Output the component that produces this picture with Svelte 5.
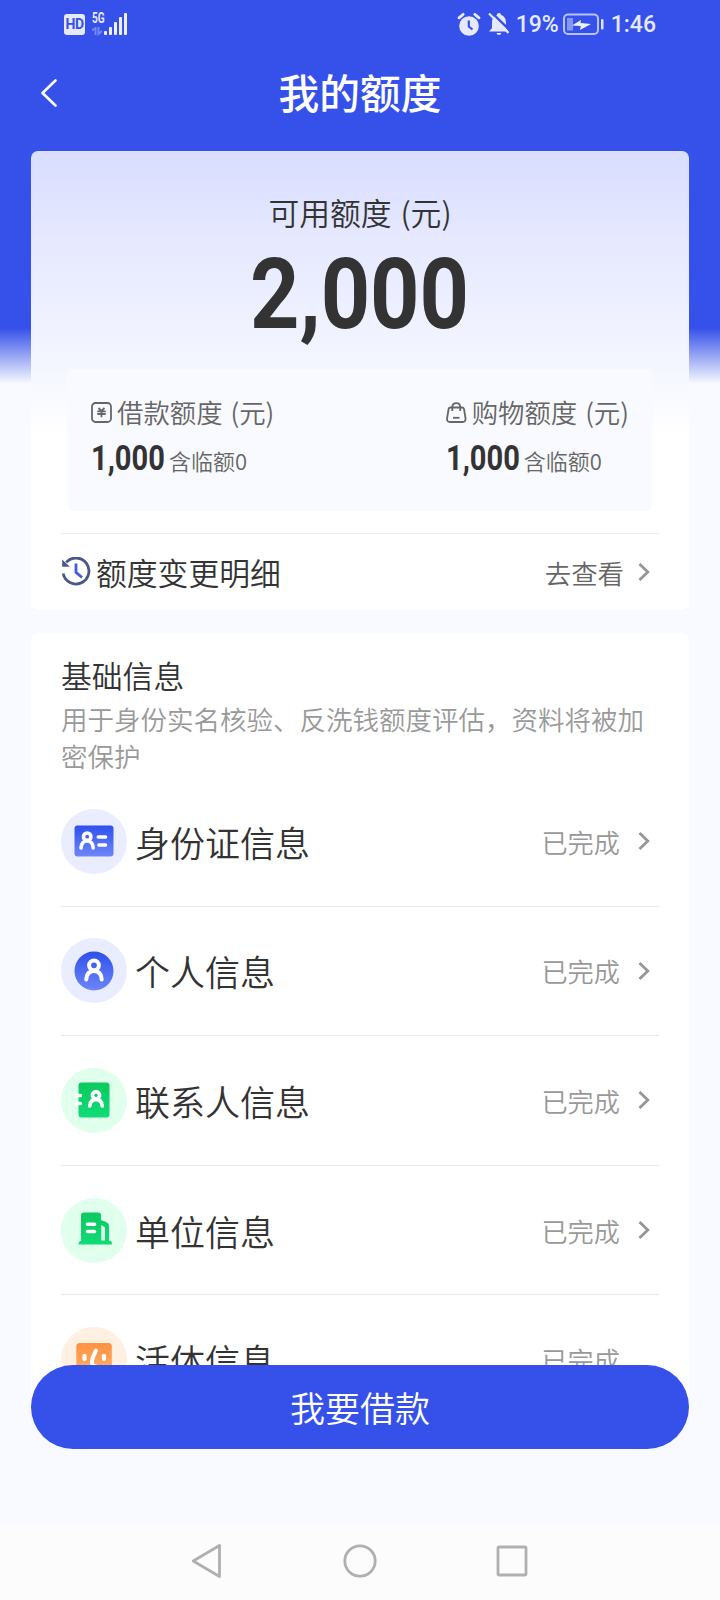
<script lang="ts">
	type Quota = { id: string; label: string; amount: string; note: string };
	type Info = { id: string; label: string; tone: string; status: string; link: boolean };

	const quotas: Quota[] = [
		{ id: "loan", label: "借款额度 (元)", amount: "1,000", note: "含临额0" },
		{ id: "shop", label: "购物额度 (元)", amount: "1,000", note: "含临额0" },
	];

	const infos: Info[] = [
		{ id: "idcard", label: "身份证信息", tone: "blue", status: "已完成", link: true },
		{ id: "person", label: "个人信息", tone: "blue", status: "已完成", link: true },
		{ id: "contact", label: "联系人信息", tone: "green", status: "已完成", link: true },
		{ id: "company", label: "单位信息", tone: "green", status: "已完成", link: true },
		{ id: "face", label: "活体信息", tone: "orange", status: "已完成", link: false },
	];
</script>

{#snippet chevron()}
	<svg class="chevron" width="13" height="20" viewBox="0 0 13 20">
		<path d="M2.5 2 L10.8 10 L2.5 18" fill="none" stroke="#969696" stroke-width="2.8" />
	</svg>
{/snippet}

<div class="phone">
	<div class="status-bar">
		<div class="status-left">
			<span class="hd">HD</span>
			<div class="network">
				<span class="net-type">5G</span>
				<svg width="10" height="9" viewBox="0 0 10 9" fill="none" stroke="#7487f2" stroke-width="2">
					<path d="M0 3.5 L3.5 1 V8 M6.5 0 V7 L10 4" />
				</svg>
			</div>
			<svg class="signal" width="24" height="23" viewBox="0 0 24 23" fill="#eef0ff">
				<rect x="0" y="18" width="3" height="4" rx="1" />
				<rect x="5" y="14" width="3" height="8" rx="1" />
				<rect x="10" y="9" width="3" height="13" rx="1" />
				<rect x="15" y="4" width="3" height="18" rx="1" />
				<rect x="20" y="0" width="3" height="22" rx="1" />
			</svg>
		</div>
		<div class="status-right">
			<svg width="24" height="24" viewBox="0 0 24 24">
				<circle cx="12" cy="14" r="9.8" fill="#e6e9ff" />
				<path d="M2 5.8 L6.2 2.3 M22 5.8 L17.8 2.3" stroke="#e6e9ff" stroke-width="2.8" stroke-linecap="round" />
				<path d="M11.8 8.5 V14.5 L15.5 17.5" fill="none" stroke="#3551ea" stroke-width="2.2" />
			</svg>
			<svg class="bell" width="22" height="24" viewBox="0 0 22 24">
				<path d="M11 1 C12.6 1 13 2 13 3 C17 4.3 18 7.5 18 11 V16 L21 19.5 H1 L4 16 V11 C4 7.5 5 4.3 9 3 C9 2 9.4 1 11 1 Z M8.5 21 H13.5 C13 23.5 9 23.5 8.5 21 Z" fill="#e6e9ff" />
				<path d="M3 0 L22 18.5" stroke="#3551ea" stroke-width="2.4" />
				<path d="M1 1.5 L20.5 21" stroke="#e6e9ff" stroke-width="2.2" />
			</svg>
			<span class="status-text percent">19%</span>
			<svg class="battery" width="42" height="23" viewBox="0 0 42 23">
				<rect x="1" y="1.5" width="34" height="19.5" rx="4" fill="none" stroke="#b9c3fb" stroke-width="2" />
				<rect x="4" y="5" width="6" height="12.5" fill="#8496f4" />
				<path d="M9 12.5 L18 7 L17.5 10 L28 11 L17 17 L17.8 13 Z" fill="#eef0ff" />
				<rect x="38" y="6" width="2.5" height="10.5" rx="1" fill="#dfe3ff" />
			</svg>
			<span class="status-text">1:46</span>
		</div>
	</div>

	<header class="nav">
		<svg class="back" width="18" height="30" viewBox="0 0 18 30">
			<path d="M15.5 2.5 L2.5 15 L15.5 27.5" fill="none" stroke="#fff" stroke-width="2.6" stroke-linecap="round" stroke-linejoin="round" />
		</svg>
		<h1>我的额度</h1>
	</header>

	<main>
		<section class="card quota-card">
			<p class="total-label">可用额度 (元)</p>
			<p class="total"><span>2,000</span></p>

			<div class="quota-box">
				{#each quotas as quota (quota.id)}
					<div class="quota">
						<div class="quota-label">
							{#if quota.id === "loan"}
								<svg width="21" height="21" viewBox="0 0 21 21" fill="none" stroke="#666">
									<rect x="1" y="1" width="19" height="19" rx="3.5" stroke-width="1.8" />
									<path d="M7.5 6 L10.5 9 L13.5 6 M6.3 9.3 H14.7 M6.3 12 H14.7 M10.5 9 V15.2" stroke-width="1.8" />
								</svg>
							{:else}
								<svg width="21" height="21" viewBox="0 0 21 21" fill="none" stroke="#666" stroke-width="1.8">
									<path d="M4.5 5.5 H16 C17.3 5.5 17.7 6 18 7 L19.5 16 C19.8 18.7 18.8 20 16.5 20 H4 C1.7 20 0.8 18.7 1.1 16 L2.6 7 C2.8 6 3.2 5.5 4.5 5.5 Z" />
									<path d="M6.3 9 V5 C6.3 -0.3 14.2 -0.3 14.2 5 V9" />
									<path d="M7 15.8 H13.5" />
								</svg>
							{/if}
							<span>{quota.label}</span>
						</div>
						<div class="quota-value">
							<strong>{quota.amount}</strong>
							<span>{quota.note}</span>
						</div>
					</div>
				{/each}
			</div>

			<div class="history">
				<svg width="30" height="30" viewBox="0 0 30 30" fill="none">
					<path d="M5.2 5.4 A13 13 0 1 1 2.2 16.5" stroke="#4a5888" stroke-width="2.8" />
					<path d="M1.2 2.5 V9.8 H8.8 Z" fill="#4a5888" />
					<path d="M15 6.5 V15.3 L21 20.5" stroke="#4458e8" stroke-width="2.8" />
				</svg>
				<span class="history-title">额度变更明细</span>
				<span class="history-link">去查看</span>
				{@render chevron()}
			</div>
		</section>

		<section class="card info-card">
			<h2>基础信息</h2>
			<p class="hint">用于身份实名核验、反洗钱额度评估，资料将被加密保护</p>

			<ul>
				{#each infos as info (info.id)}
					<li>
						<span class="badge {info.tone}">
							<svg width="40" height="40" viewBox="0 0 40 40" fill="none">
								<defs>
									<linearGradient id="g-{info.id}" x1="0" y1="0" x2="0" y2="1">
										{#if info.tone === "blue"}
											<stop offset="0" stop-color="#2f50ea" />
											<stop offset="1" stop-color="#6e86fb" />
										{:else if info.tone === "green"}
											<stop offset="0" stop-color="#0ac95f" />
											<stop offset="1" stop-color="#10dc76" />
										{:else}
											<stop offset="0" stop-color="#ff9140" />
											<stop offset="1" stop-color="#ffb370" />
										{/if}
									</linearGradient>
								</defs>
								{#if info.id === "idcard"}
									<rect x="0.5" y="4.5" width="39" height="31" rx="3" fill="url(#g-idcard)" />
									<g stroke="#fff" stroke-width="3.6" stroke-linecap="round">
										<circle cx="13.2" cy="15.7" r="3.7" />
										<path d="M7 27 C7.3 23 9.3 20 13.2 20 C17.1 20 18.9 23 19.2 27" />
										<path d="M24.3 16 H31.5 M25 24 H31.5" />
									</g>
								{:else if info.id === "person"}
									<circle cx="20" cy="20" r="19.5" fill="url(#g-person)" />
									<g stroke="#fff" stroke-width="4" stroke-linecap="round">
										<circle cx="20" cy="14.3" r="4.9" />
										<path d="M12.3 28.5 C12.6 23 15 20 20 20 C25 20 27.4 23 27.7 28.5" />
									</g>
								{:else if info.id === "contact"}
									<rect x="4.5" y="2.5" width="31" height="35" rx="3" fill="url(#g-contact)" />
									<g stroke="#fff" stroke-width="3.7" stroke-linecap="round">
										<circle cx="22" cy="15.3" r="3.6" />
										<path d="M15.8 26 C16 22 18 19.6 22 19.6 C26 19.6 28 22 28.2 26" />
										<path d="M2 15.5 H6.3 M2 23.5 H6.3" />
									</g>
								{:else if info.id === "company"}
									<path d="M7 31 V5.5 Q7 2.5 10 2.5 H24 Q27 2.5 27 5.5 V10 L33 12.5 Q35 13.5 35 16 V31 H37 Q38 31.5 38 34.5 H4.5 Q4.5 31.5 6 31 Z" fill="url(#g-company)" />
									<path d="M13.5 14.2 H20.5 M13.5 21.5 H20.5" stroke="#fff" stroke-width="3.6" stroke-linecap="round" />
									<path d="M27.3 15 L31 17.2 V30.5 H27.3 Z" fill="#e2ffee" />
								{:else}
									<rect x="2.3" y="3" width="35.5" height="36" rx="3.5" fill="url(#g-face)" />
									<path d="M10.5 15.8 V19 M30 15.8 V19" stroke="#fff" stroke-width="4.2" stroke-linecap="round" />
									<path d="M22 10.5 L18.8 17.5 C17.5 21.5 17.5 25.5 21 26" stroke="#fff" stroke-width="4" stroke-linecap="round" />
								{/if}
							</svg>
						</span>
						<span class="info-label">{info.label}</span>
						<span class="info-status" class:no-link={!info.link}>{info.status}</span>
						{#if info.link}
							{@render chevron()}
						{/if}
					</li>
				{/each}
			</ul>
		</section>
	</main>

	<div class="action">
		<button type="button">我要借款</button>
	</div>

	<div class="system-nav">
		<svg width="34" height="36" viewBox="0 0 34 36"><path d="M2.2 18 L28.5 2.5 V33.5 Z" /></svg>
		<svg width="34" height="36" viewBox="0 0 34 36"><circle cx="17" cy="18" r="15.2" /></svg>
		<svg width="34" height="36" viewBox="0 0 34 36"><rect x="3" y="4" width="28" height="28" rx="1" /></svg>
	</div>
</div>

<style>
	:global(body) {
		margin: 0;
	}

	.phone {
		width: 720px;
		height: 1600px;
		display: flex;
		flex-direction: column;
		overflow: hidden;
		background: linear-gradient(#3551ea 0, #3551ea 328px, #f9faff 384px);
		font-family: "Noto Sans CJK SC", "Noto Sans", sans-serif;
		font-weight: 350;
		color: #333;
	}

	h1,
	h2,
	p,
	ul {
		margin: 0;
		padding: 0;
		font-weight: inherit;
	}

	svg {
		display: block;
		flex: none;
	}

	/* Status bar */

	.status-bar {
		box-sizing: border-box;
		height: 50px;
		padding: 0 64px 2px;
		display: flex;
		justify-content: space-between;
		align-items: center;
	}

	.status-left,
	.status-right {
		display: flex;
		align-items: center;
	}

	.hd {
		width: 21px;
		height: 21px;
		border-radius: 3px;
		background: #e6e9ff;
		color: #3551ea;
		font: 700 14px/21px Roboto, sans-serif;
		letter-spacing: -0.5px;
		text-align: center;
		margin-top: 1px;
	}

	.network {
		margin-left: 7px;
		width: 12px;
		display: flex;
		flex-direction: column;
		gap: 3px;
	}

	.net-type {
		font: 700 14px/11px Roboto, sans-serif;
		color: #e6e9ff;
		transform: scaleX(0.72);
		transform-origin: left;
	}

	.status-text {
		font: 500 23px/30px Roboto, sans-serif;
		color: #e6e9ff;
		margin-top: 2px;
	}

	.bell {
		margin-left: 7px;
	}

	.percent {
		margin-left: 6px;
		width: 42px;
	}

	.battery {
		margin: 0 6px 0 5px;
	}

	/* Title bar */

	.nav {
		height: 84px;
		margin-bottom: 17px;
		padding: 0 40px;
		display: grid;
		grid-template-columns: 40px 1fr 40px;
		align-items: center;
	}

	.back {
		margin-top: 2px;
	}

	h1 {
		font-size: 40.7px;
		font-weight: 500;
		line-height: 60px;
		text-align: center;
		color: #fff;
	}

	/* Cards */

	main {
		height: 1254px;
		padding: 0 31px;
		overflow: hidden;
		flex: none;
	}

	.card {
		box-sizing: border-box;
		border-radius: 7px;
		background: #fff;
		padding: 0 30px;
	}

	.quota-card {
		height: 459px;
		padding-top: 40px;
		background: linear-gradient(#d9ddff 0, #e6e9ff 90px, #f4f6ff 215px, #fff 285px);
	}

	.total-label {
		font-size: 30.8px;
		line-height: 42px;
		text-align: center;
		word-spacing: 2px;
	}

	.total {
		margin-top: 16px;
		height: 92px;
		font: 700 98px/92px Roboto, sans-serif;
		text-align: center;
	}

	.total span {
		display: inline-block;
		transform: scaleX(0.88);
	}

	.quota-box {
		box-sizing: border-box;
		height: 142px;
		margin: 28px 6px 22px;
		padding: 28px 24px 0;
		display: flex;
		justify-content: space-between;
		border-radius: 6px;
		background: #f9faff;
	}

	.quota-label {
		display: flex;
		align-items: center;
		gap: 5px;
		font-size: 26.4px;
		line-height: 30px;
		word-spacing: 2px;
		color: #666;
	}

	.quota-value {
		display: flex;
		align-items: baseline;
		margin-top: 15px;
		line-height: 34px;
		font-size: 22px;
		color: #666;
	}

	.quota-value strong {
		width: 78px;
		font: 700 35px/34px Roboto, sans-serif;
		color: #333;
		transform: scaleX(0.83);
		transform-origin: left;
	}

	.history {
		height: 76px;
		border-top: 1px solid #ececec;
		display: flex;
		align-items: center;
		padding-right: 9px;
	}

	.history-title {
		margin-left: 5px;
		font-size: 30.8px;
		line-height: 44px;
		margin-bottom: 1px;
	}

	.history-link {
		margin-left: auto;
		margin-right: 13px;
		font-size: 26.4px;
		color: #666;
	}

	.info-card {
		margin-top: 23px;
		padding-top: 23px;
	}

	h2 {
		font-size: 30.8px;
		line-height: 37px;
	}

	.hint {
		margin-top: 7px;
		margin-bottom: 3px;
		font-size: 26.5px;
		line-height: 37px;
		color: #999;
	}

	ul {
		list-style: none;
	}

	li {
		box-sizing: border-box;
		height: 129.6px;
		border-bottom: 1px solid #e9e9e9;
		display: flex;
		align-items: center;
		padding-right: 9px;
	}

	.badge {
		width: 66px;
		height: 65px;
		border-radius: 50%;
		display: flex;
		align-items: center;
		justify-content: center;
	}

	.blue {
		background: #e9edff;
	}

	.green {
		background: #e0ffed;
	}

	.orange {
		background: #fff0e2;
	}

	.info-label {
		margin-left: 8px;
		font-size: 35px;
	}

	.info-status {
		margin-left: auto;
		margin-right: 17px;
		padding-top: 1px;
		font-size: 26.2px;
		color: #999;
	}

	.no-link {
		margin-right: 30px;
	}

	/* Bottom button overlaps the end of the list */

	.action {
		position: relative;
		margin-top: -40px;
		height: 158px;
		padding: 0 31px;
		flex: none;
	}

	button {
		display: block;
		width: 100%;
		height: 84px;
		border: 0;
		padding: 0 0 2px;
		border-radius: 42px;
		background: #3551ea;
		color: #fff;
		font: inherit;
		font-size: 35px;
	}

	.system-nav {
		box-sizing: border-box;
		height: 77px;
		padding-bottom: 2px;
		display: flex;
		justify-content: center;
		align-items: center;
		gap: 118px;
		background: #fcfcfc;
	}

	.system-nav svg {
		fill: none;
		stroke: #b0b0b0;
		stroke-width: 2.8;
		stroke-linejoin: round;
	}
</style>
